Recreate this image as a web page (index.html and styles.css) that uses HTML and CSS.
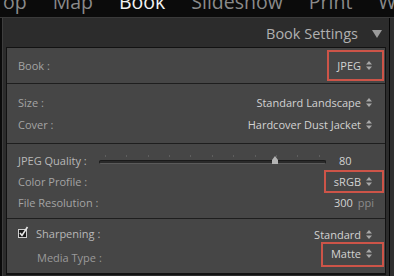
FILE: index.html
```html
<!DOCTYPE html>
<html lang="en">
<head>
    <meta charset="UTF-8">
    <title>Book Settings</title>
    <link rel="stylesheet" href="styles.css">
</head>
<body>

<!-- Module picker (cropped at the top) -->
<div class="topnav">
    <div class="tabs">
        <span class="tab">op</span>
        <span class="sep"></span>
        <span class="tab">Map</span>
        <span class="sep"></span>
        <span class="tab active">Book</span>
        <span class="sep"></span>
        <span class="tab">Slideshow</span>
        <span class="sep"></span>
        <span class="tab">Print</span>
        <span class="sep"></span>
        <span class="tab">Web</span>
    </div>
</div>

<div class="main">
    <div class="panel">
        <div class="panel-head">
            <span class="panel-title">Book Settings</span>
            <svg class="collapse" width="10" height="8" viewBox="0 0 10 8"><path d="M0 0H10L5 8Z" fill="#9a9a9a"/></svg>
        </div>

        <div class="box">
            <div class="section">
                <div class="row">
                    <span class="label">Book :</span>
                    <span class="value boxed tall">JPEG <svg class="updown" width="6" height="9" viewBox="0 0 6 9"><path d="M0 3.5L3 0L6 3.5ZM0 5.5L3 9L6 5.5Z" fill="#a8a8a8"/></svg></span>
                </div>
            </div>

            <div class="section sec-size">
                <div class="row">
                    <span class="label">Size :</span>
                    <span class="value">Standard Landscape <svg class="updown" width="6" height="9" viewBox="0 0 6 9"><path d="M0 3.5L3 0L6 3.5ZM0 5.5L3 9L6 5.5Z" fill="#a8a8a8"/></svg></span>
                </div>
                <div class="row">
                    <span class="label">Cover :</span>
                    <span class="value">Hardcover Dust Jacket <svg class="updown" width="6" height="9" viewBox="0 0 6 9"><path d="M0 3.5L3 0L6 3.5ZM0 5.5L3 9L6 5.5Z" fill="#a8a8a8"/></svg></span>
                </div>
            </div>

            <div class="section sec-jpeg">
                <div class="row">
                    <span class="label light">JPEG Quality :</span>
                    <div class="slider">
                        <div class="ticks">
                            <i></i><i></i><i></i><i></i><i></i><i></i><i></i><i></i><i></i><i></i><i></i>
                        </div>
                        <div class="track"></div>
                        <svg class="thumb" width="10" height="9" viewBox="0 0 10 9"><path d="M5 0L8 4V8H2V4Z" fill="#b4b4b4"/></svg>
                    </div>
                    <span class="num">80</span>
                </div>
                <div class="row">
                    <span class="label">Color Profile :</span>
                    <span class="value boxed">sRGB <svg class="updown" width="6" height="9" viewBox="0 0 6 9"><path d="M0 3.5L3 0L6 3.5ZM0 5.5L3 9L6 5.5Z" fill="#a8a8a8"/></svg></span>
                </div>
                <div class="row">
                    <span class="label">File Resolution :</span>
                    <span class="value res">300 <span class="unit">ppi</span></span>
                </div>
            </div>

            <div class="section sec-sharp">
                <div class="row">
                    <span class="label light check-label">
                        <svg class="check" width="12" height="12" viewBox="0 0 12 12">
                            <rect x="0.5" y="3.5" width="8" height="8" fill="#1a1a1a" stroke="#cfcfcf"/>
                            <path d="M2 7L4 9.5L9.5 1" fill="none" stroke="#e4e4e4" stroke-width="1.6"/>
                        </svg>
                        Sharpening :
                    </span>
                    <span class="value">Standard <svg class="updown" width="6" height="9" viewBox="0 0 6 9"><path d="M0 3.5L3 0L6 3.5ZM0 5.5L3 9L6 5.5Z" fill="#a8a8a8"/></svg></span>
                </div>
                <div class="row">
                    <span class="label indent">Media Type :</span>
                    <span class="value boxed mid">Matte <svg class="updown" width="6" height="9" viewBox="0 0 6 9"><path d="M0 3.5L3 0L6 3.5ZM0 5.5L3 9L6 5.5Z" fill="#a8a8a8"/></svg></span>
                </div>
            </div>
        </div>
    </div>
    <div class="edge"></div>
</div>

</body>
</html>
```

FILE: styles.css
```css
* {
    box-sizing: border-box;
    margin: 0;
    padding: 0;
}

body {
    width: 394px;
    height: 276px;
    overflow: hidden;
    background: #0b0b0b;
    font-family: "Open Sans", "Noto Sans", sans-serif;
    font-size: 11px;
    color: #a6a6a6;
}

/* top module picker */
.topnav {
    height: 18px;
    overflow: hidden;
    background: #0b0b0b;
    border-bottom: 1px solid #3a3a3a;
}

.tabs {
    display: flex;
    align-items: flex-start;
    gap: 13px;
    margin-top: -11px;
    margin-left: 3px;
    white-space: nowrap;
    font-size: 19.5px;
    line-height: 26px;
    color: #8a8a8a;
}

.tab.active {
    color: #f2f2f2;
}

.sep {
    width: 1px;
    height: 15px;
    background: #6a6a6a;
}

/* panel */
.main {
    display: flex;
    height: 258px;
}

.panel {
    flex: 1;
    margin-left: 2px;
    border-left: 1px solid #3e3e3e;
    background: #2c2c2c;
    padding: 0 3px 0 3px;
}

.edge {
    width: 5px;
    border-left: 1px solid #050505;
    background: #2e2e2e;
}

.panel-head {
    height: 29px;
    display: flex;
    align-items: center;
    justify-content: flex-end;
    gap: 14px;
    padding-right: 4px;
    padding-top: 2px;
}

.panel-title {
    font-size: 14.5px;
    color: #b0b0b0;
}

.box {
    background: #464646;
    border: 1px solid #121212;
    border-bottom-width: 2px;
}

.section {
    padding: 2px 11px 2px 11px;
    height: 35px;
    display: flex;
    flex-direction: column;
    justify-content: center;
}

.section + .section {
    border-top: 1px solid #1e1e1e;
}

.sec-size {
    height: 60px;
}

.sec-jpeg {
    height: 75px;
}

.sec-sharp {
    height: 55px;
}

.row {
    display: flex;
    align-items: center;
    justify-content: space-between;
    height: 22px;
}

.sec-jpeg .row {
    height: 21px;
}

.sec-sharp .row {
    height: 23px;
}

.label {
    color: #a4a4a4;
    white-space: nowrap;
}

.label.light {
    color: #b8b8b8;
}

.check-label {
    display: flex;
    align-items: center;
    gap: 6px;
    margin-top: -3px;
}

.check {
    margin-top: -2px;
}

.indent {
    padding-left: 19px;
    color: #9a9a9a;
}

.value {
    display: flex;
    align-items: center;
    gap: 4px;
    color: #d2d2d2;
    white-space: nowrap;
    padding-right: 2px;
}

.updown {
    margin-left: 1px;
}

/* red highlight boxes */
.boxed {
    outline: 2px solid #cd5448;
    padding: 2px 10px 2px 8px;
    margin: -2px -8px -2px 0;
}

.boxed.tall {
    padding-top: 6px;
    padding-bottom: 6px;
    margin-top: -6px;
    margin-bottom: -6px;
}

.boxed.mid {
    padding-top: 2px;
    padding-bottom: 4px;
    margin-top: -8px;
    margin-bottom: -2px;
}

.res {
    gap: 5px;
    padding-right: 0;
}

.unit {
    color: #8c8c8c;
}

.num {
    color: #d2d2d2;
    width: 48px;
    padding-left: 13px;
}

/* slider */
.slider {
    position: relative;
    flex: 1;
    margin-left: 12px;
    height: 12px;
    margin-top: 2px;
}

.ticks {
    display: flex;
    justify-content: space-between;
    padding: 0 6px;
    height: 3px;
}

.ticks i {
    width: 1px;
    height: 2px;
    background: #5e5e5e;
}

.track {
    margin-top: 2px;
    height: 4px;
    border-radius: 2px;
    background: #2a2a2a;
    border: 1px solid #1a1a1a;
    border-bottom-color: #5a5a5a;
}

.thumb {
    position: absolute;
    left: 171px;
    top: 1px;
}
```
